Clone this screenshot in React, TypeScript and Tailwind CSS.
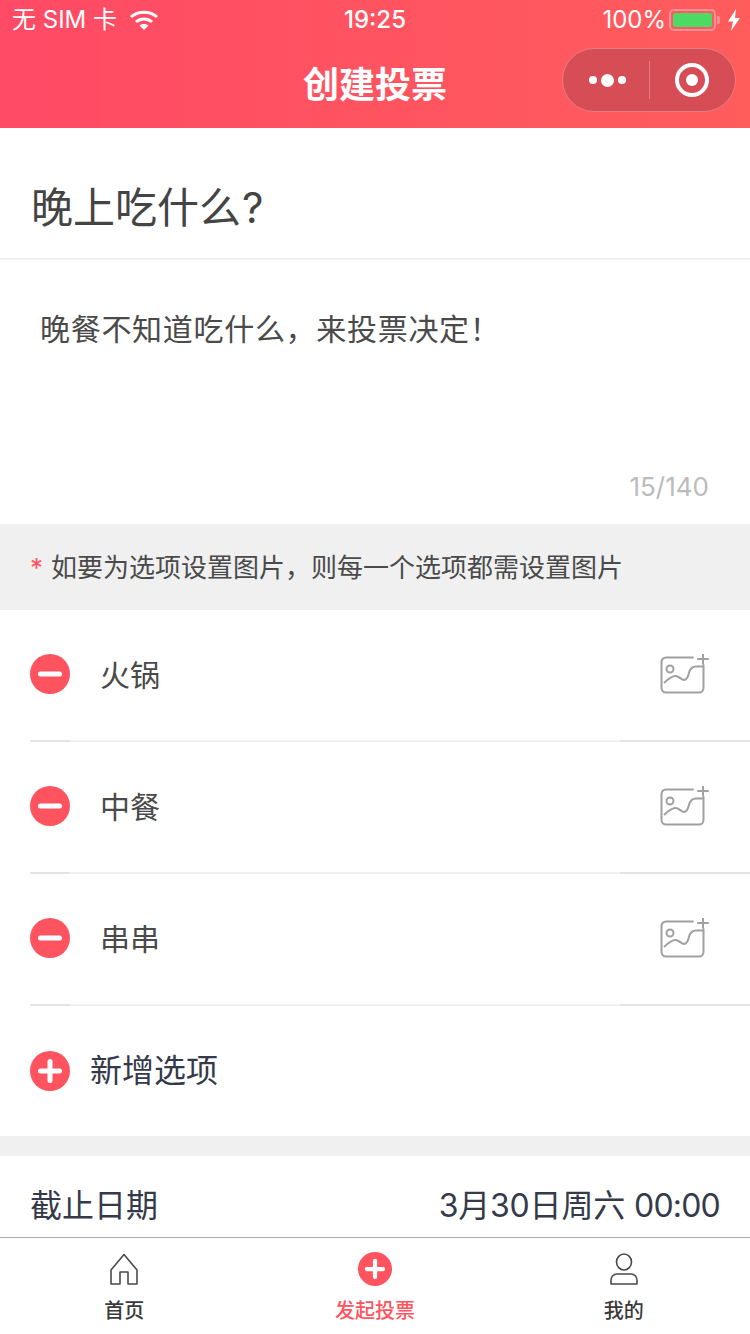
function Minus() {
  return (
    <svg width="40" height="40" viewBox="0 0 40 40" className="shrink-0">
      <circle cx="20" cy="20" r="20" fill="#ff5460" />
      <rect x="8" y="17.5" width="24" height="5" rx="2.5" fill="#fff" />
    </svg>
  );
}
function Plus({ size = 40 }: { size?: number }) {
  return (
    <svg width={size} height={size} viewBox="0 0 40 40" className="shrink-0">
      <circle cx="20" cy="20" r="20" fill="#ff5460" />
      <rect x="8" y="17.5" width="24" height="5" rx="2.5" fill="#fff" />
      <rect x="17.5" y="8" width="5" height="24" rx="2.5" fill="#fff" />
    </svg>
  );
}
function ImageAdd() {
  return (
    <svg width="50" height="42" viewBox="0 0 50 42" fill="none" stroke="#a0a0a0" strokeWidth="2" className="shrink-0">
      <path d="M33 3.500H6a4.500 4.500 0 0 0-4.500 4.500v26a4.500 4.500 0 0 0 4.500 4.500h33a4.500 4.500 0 0 0 4.500-4.500V11" strokeLinecap="round" />
      <circle cx="10" cy="15" r="3.500" />
      <path d="M4 29c4-4 7-6.500 11-7s6 4 9 4 4-3 5-7 3-6.500 7-6.500h7" />
      <path d="M38 5h10M43 0.500v9" strokeLinecap="round" />
    </svg>
  );
}
function Option({ label }: { label: string }) {
  return (
    <div className="relative flex h-[132px] items-center pl-[30px] pr-[40px]">
      <div className="mt-[-4px]"><Minus /></div>
      <span className="ml-[30px] mt-[-2px] flex-1 text-[30px] text-[#4a4a4a]">{label}</span>
      <div className="mt-[-2px]"><ImageAdd /></div>
      <div className="absolute bottom-0 left-[30px] right-0 flex h-[2px] bg-[#f0f0f0]">
        <div className="w-[40px] bg-[#e4e4e4]" />
        <div className="flex-1" />
        <div className="w-[130px] bg-[#e4e4e4]" />
      </div>
    </div>
  );
}
function Tab({ icon, label, active }: { icon: React.ReactNode; label: string; active?: boolean }) {
  return (
    <div className={`flex flex-1 flex-col items-center ${active ? "" : "pr-[2px]"}`}>
      <div className="flex h-[34px] w-[34px] items-center justify-center">{icon}</div>
      <span className={`mt-[11px] text-[20px] leading-[28px] font-medium ${active ? "text-[#ff5460]" : "text-[#3a3a3a]"}`}>{label}</span>
    </div>
  );
}
export default function App() {
  return (
    <div className="flex h-[1334px] w-[750px] flex-col overflow-hidden bg-white font-['Inter','Noto_Sans_CJK_SC',sans-serif]">
      <header className="relative h-[128px] shrink-0 bg-gradient-to-r from-[#ff4a65] to-[#ff5c5c] text-white">
        <div className="flex h-[40px] items-center justify-between px-[12px] text-[24px]">
          <div className="flex w-[270px] items-center">
            <span className="leading-none">无 SIM 卡</span>
            <svg width="30" height="22" viewBox="0 0 30 22" className="ml-[12px]" fill="none" stroke="#fff" strokeWidth="3">
              <path d="M2 8c7-6.500 19-6.500 26 0" />
              <path d="M7 13c4.500-4 11.500-4 16 0" />
              <path d="M15 21l-4.500-4.500c2.500-2 6.500-2 9 0z" fill="#fff" stroke="none" />
            </svg>
          </div>
          <span className="text-center font-medium">19:25</span>
          <div className="flex w-[270px] items-center justify-end">
            <span>100%</span>
            <div className="ml-[3px] flex h-[22px] w-[47px] items-center rounded-[5px] border-2 border-[#ff9096] p-[2px]">
              <div className="h-full w-full rounded-[2px] bg-[#4cd964]" />
            </div>
            <div className="ml-[1px] h-[8px] w-[3px] rounded-r-[2px] bg-[#ff9096]" />
            <svg width="14" height="22" viewBox="0 0 14 22" className="ml-[7px] mr-[-3px]" fill="#fff">
              <path d="M9 0 1 12.500h5L4 22l9-13H8z" />
            </svg>
          </div>
        </div>
        <div className="flex h-[88px] items-center justify-center pt-[2px]">
          <span className="text-[36px] leading-[50px] font-bold">创建投票</span>
        </div>
        <div className="absolute left-[562px] top-[48px] flex h-[64px] w-[174px] items-center rounded-full border border-[#e57e84] bg-[#d74d55]">
          <div className="flex h-[38px] w-[87px] items-center justify-center gap-[4px] border-r border-[#e57e84] pl-[3px]">
            <i className="h-[8px] w-[8px] rounded-full bg-white" />
            <i className="h-[13px] w-[13px] rounded-full bg-white" />
            <i className="h-[8px] w-[8px] rounded-full bg-white" />
          </div>
          <div className="flex flex-1 items-center justify-center pr-[2px]">
            <div className="flex h-[34px] w-[34px] items-center justify-center rounded-full border-[4px] border-white">
              <i className="h-[12px] w-[12px] rounded-full bg-white" />
            </div>
          </div>
        </div>
      </header>

      <main className="min-h-0 flex-1 overflow-hidden">
        <div className="flex h-[132px] items-center border-b-2 border-[#f0f0f0] pl-[31px] pt-[30px] text-[42px] leading-[60px] text-[#444]">
          晚上吃什么<span className="ml-[1px]">?</span>
        </div>
        <div className="flex h-[264px] flex-col px-[41px] pt-[50px]">
          <p className="ml-[-1px] text-[30px] leading-[38px] tracking-[0.7px] text-[#4a4a4a]">{"晚餐不知道吃什么\uFF0C来投票决定\uFF01"}</p>
          <span className="mt-auto mb-[19px] self-end text-[26px] leading-[36px] text-[#bbb]">15/140</span>
        </div>
        <div className="flex h-[86px] items-center bg-[#f0f0f0] pl-[30px] text-[26px] text-[#4a4a4a]">
          <span className="mr-[8px] text-[#ff5460]">*</span>{"如要为选项设置图片\uFF0C则每一个选项都需设置图片"}
        </div>
        <Option label="火锅" />
        <Option label="中餐" />
        <Option label="串串" />
        <div className="flex h-[130px] items-center pl-[30px]">
          <Plus />
          <span className="ml-[20px] text-[32px] text-[#353a4a]">新增选项</span>
        </div>
        <div className="h-[20px] bg-[#f0f0f0]" />
        <div className="flex h-[100px] items-center justify-between px-[30px] text-[32px] text-[#353a4a]">
          <span>截止日期</span>
          <span>
            <span className="tracking-[-0.2px]">3月30日周六</span> <span className="tracking-[-0.8px]">00:00</span>
          </span>
        </div>
      </main>

      <nav className="flex h-[97px] shrink-0 border-t border-[#aaa] bg-white pt-[14px]">
        <Tab
          label="首页"
          icon={
            <svg width="30" height="32" viewBox="0 0 30 32" fill="none" stroke="#4a4a4a" strokeWidth="1.6">
              <path d="M15 1.500 2 17v14h9V19h8v12h9V17z" strokeLinejoin="round" />
            </svg>
          }
        />
        <Tab label="发起投票" active icon={<Plus size={34} />} />
        <Tab
          label="我的"
          icon={
            <svg width="30" height="32" viewBox="0 0 30 32" fill="none" stroke="#4a4a4a" strokeWidth="1.6">
              <ellipse cx="15" cy="9" rx="7.500" ry="8" />
              <path d="M2 31v-4a6 6 0 0 1 6-6h14a6 6 0 0 1 6 6v4z" strokeLinejoin="round" />
            </svg>
          }
        />
      </nav>
    </div>
  );
}
